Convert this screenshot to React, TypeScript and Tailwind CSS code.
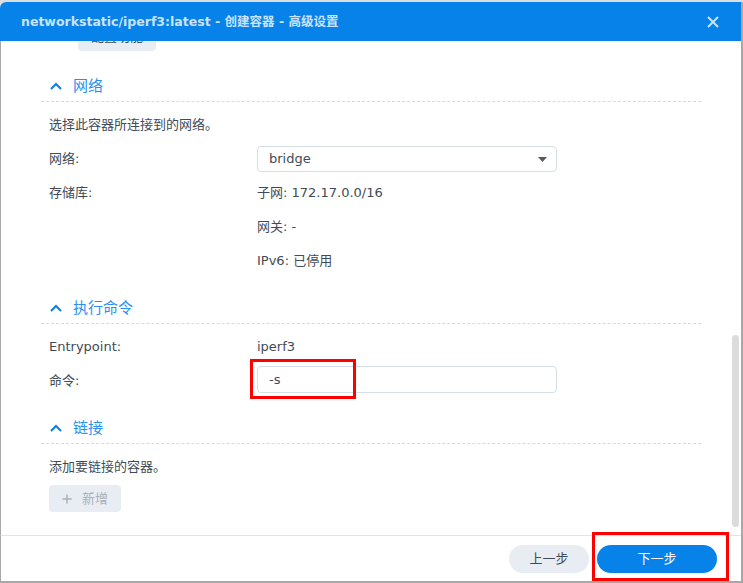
import { Plus } from 'lucide-react'

const body = { fontFamily: '"DejaVu Sans", "Noto Sans CJK SC", sans-serif' }

function Chevron() {
  return (
    <svg width="12" height="8" viewBox="0 0 12 8" className="shrink-0">
      <polyline points="1,7 6,2 11,7" fill="none" stroke="#0b7fe0" strokeWidth="2" />
    </svg>
  )
}

function SectionHeader({ title }: { title: string }) {
  return (
    <div className="h-[31px] flex items-center gap-[11px] pl-[9px] border-b border-dashed border-[#d3dbe3]">
      <Chevron />
      <span className="text-[15px] text-[#2b8ff0]">{title}</span>
    </div>
  )
}

function Row({ label, children }: { label: string; children: React.ReactNode }) {
  return (
    <div className="h-[34px] flex items-center pl-[8px]">
      <div className="w-[208px] shrink-0">{label}</div>
      <div className="flex-1">{children}</div>
    </div>
  )
}

export default function App() {
  return (
    <div className="relative w-[743px] h-[583px] bg-[#dedede] pt-[2px] overflow-hidden" style={body}>
      <div className="h-full flex flex-col bg-white border-r-2 border-b-2 border-[#a8a8a8] rounded-tl-[6px] overflow-hidden">
        {/* title bar */}
        <div className="h-[39px] shrink-0 bg-[#0782e9] flex items-center justify-between pl-[21px] pr-[22px] pt-[1px]">
          <span className="text-[12.5px] font-bold text-[#c9e3fb]">
            networkstatic/iperf3:latest - 创建容器 - 高级设置
          </span>
          <svg width="12" height="12" viewBox="0 0 12 12">
            <path d="M1 1L11 11M11 1L1 11" stroke="#c9e3fb" strokeWidth="2" />
          </svg>
        </div>

        {/* content */}
        <div className="relative flex-1 border-l border-[#a8a8a8] overflow-hidden">
          <div className="-mt-[18px] px-[40px] text-[13px] text-[#414b55]">
            <div className="ml-[37px] w-[78px] h-[28px] rounded-[4px] bg-[#e8edf4] flex items-center justify-center text-[#414b55]">
              配置功能
            </div>

            <div className="mt-[20px]">
              <SectionHeader title="网络" />
              <div className="mt-[6px]">
                <div className="h-[34px] flex items-center pl-[8px]">选择此容器所连接到的网络。</div>
                <Row label="网络:">
                  <div className="w-[300px] h-[26px] border border-[#d5dde6] rounded-[4px] flex items-center justify-between pl-[11px] pr-[9px]">
                    <span>bridge</span>
                    <svg width="9" height="5" viewBox="0 0 9 5">
                      <path d="M0 0H9L4.5 5Z" fill="#555b62" />
                    </svg>
                  </div>
                </Row>
                <Row label="存储库:">子网: 172.17.0.0/16</Row>
                <Row label="">网关: -</Row>
                <Row label="">IPv6: 已停用</Row>
              </div>
            </div>

            <div className="mt-[15px]">
              <SectionHeader title="执行命令" />
              <div className="mt-[6px]">
                <Row label="Entrypoint:">iperf3</Row>
                <Row label="命令:">
                  <div className="w-[300px] h-[27px] -mt-[3px] border border-[#d5dde6] rounded-[4px] flex items-center pl-[11px]">
                    -s
                  </div>
                </Row>
              </div>
            </div>

            <div className="mt-[15px]">
              <SectionHeader title="链接" />
              <div className="mt-[6px]">
                <div className="h-[34px] flex items-center pl-[8px]">添加要链接的容器。</div>
                <div className="ml-[8px] mt-[1px] w-[72px] h-[27px] rounded-[4px] bg-[#e8edf4] flex items-center gap-[8px] pl-[11px] text-[#a9b0b9]">
                  <Plus size={14} strokeWidth={2.5} />
                  <span>新增</span>
                </div>
              </div>
            </div>
          </div>

          {/* scrollbar */}
          <div className="absolute right-[2px] top-[294px] w-[7px] h-[192px] rounded-full bg-[#dcdcdc]" />
        </div>

        {/* footer */}
        <div className="h-[46px] shrink-0 border-t border-l border-t-[#dde4ea] border-l-[#a8a8a8] flex items-center justify-end gap-[8px] pr-[24px] text-[13px]">
          <button className="w-[80px] h-[28px] rounded-full bg-[#e8edf4] text-[#414b55]">上一步</button>
          <button className="w-[120px] h-[28px] rounded-full bg-[#0782e9] text-white">下一步</button>
        </div>
      </div>

      {/* annotation boxes */}
      <div className="absolute left-[250px] top-[359px] w-[106px] h-[40px] border-[3px] border-[#ff0000]" />
      <div className="absolute left-[592px] top-[532px] w-[137px] h-[49px] border-[3px] border-[#ff0000]" />
    </div>
  )
}
